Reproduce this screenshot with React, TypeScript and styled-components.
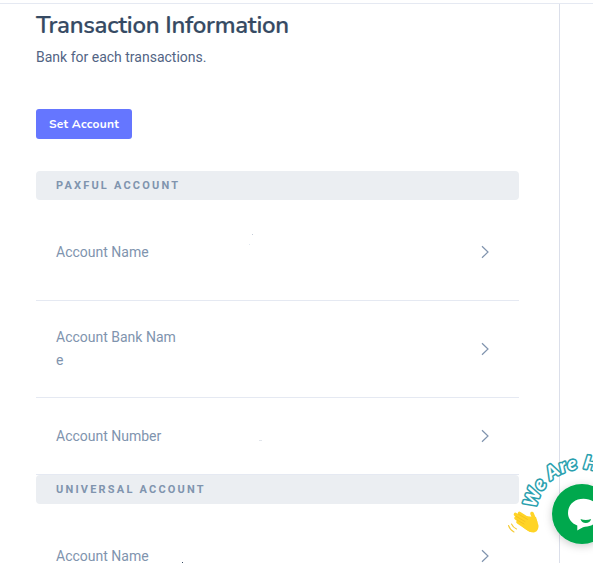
import React from 'react';
import styled, { createGlobalStyle } from 'styled-components';

const GlobalStyle = createGlobalStyle`
  *, *::before, *::after { box-sizing: border-box; }
  html, body { margin: 0; height: 100%; overflow: hidden; background: #fff; }
  body { font-family: Roboto, sans-serif; font-size: 14px; color: #526484; }
`;

const Page = styled.div`
  position: relative;
  height: 564px;
  padding-top: 3px;
  overflow: hidden;
`;

const Card = styled.main`
  height: 560px;
  border-top: 1px solid #e5e9f2;
  display: grid;
  grid-template-columns: 560px 1fr;
`;

const Content = styled.section`
  border-right: 1px solid #dbdfea;
  padding: 7px 40px 0 36px;
  overflow: hidden;
`;

const Title = styled.h4`
  margin: 0;
  height: 28px;
  font: 600 24px/28px "Nunito", "Open Sans", sans-serif;
  letter-spacing: -0.28px;
  color: #364a63;
  -webkit-text-stroke: 0.2px #364a63;
  white-space: nowrap;
`;

const Description = styled.p`
  margin: 7px 0 40px;
  line-height: 23px;
`;

const Button = styled.button`
  display: block;
  width: 96px;
  height: 30px;
  margin: 0 0 32px;
  padding: 0;
  border: 0;
  border-radius: 3px;
  background: #6576ff;
  color: #fff;
  font: 700 12px/20px "Nunito", "Open Sans", sans-serif;
  letter-spacing: 0.24px;
  white-space: nowrap;
`;

const GroupHead = styled.h6`
  margin: 0;
  height: 29px;
  padding: 0 20px;
  border-radius: 4px;
  background: #ebeef2;
  color: #8094ae;
  font: 700 11px/29px Roboto, sans-serif;
  letter-spacing: 2.2px;
  text-transform: uppercase;
`;

const Row = styled.div<{ $height: number; $first?: boolean }>`
  position: relative;
  display: flex;
  align-items: center;
  justify-content: space-between;
  height: ${(p) => p.$height}px;
  padding: ${(p) => (p.$first ? 4 : 0)}px 26px 0 20px;
  border-bottom: 1px solid #e5e9f2;
  color: #8094ae;
`;

const Label = styled.span`
  width: 122px;
  line-height: 23px;
  word-break: break-all;
`;

const Speck = styled.i<{ $x: number; $y: number; $w?: number; $color?: string }>`
  position: absolute;
  left: ${(p) => p.$x}px;
  top: ${(p) => p.$y}px;
  width: ${(p) => p.$w ?? 1}px;
  height: 1px;
  background: ${(p) => p.$color ?? '#c5cdd9'};
`;

const ChatWidget = styled.svg`
  position: absolute;
  left: 493px;
  top: 444px;
  width: 100px;
  height: 120px;
`;

function Chevron() {
  return (
    <svg width="16" height="16" viewBox="0 0 16 16" fill="none" stroke="#8094ae" strokeWidth="1.2">
      <path d="M5 2.2 11 8 5 13.8" />
    </svg>
  );
}

function ChatLauncher() {
  return (
    <ChatWidget viewBox="493 444 100 120">
      <defs>
        <path id="greetingArc" d="M536 508.500 A46.500 46.500 0 0 1 628.500 516" />
        <filter id="launcherShadow" x="-30%" y="-30%" width="160%" height="160%">
          <feDropShadow dx="0" dy="2" stdDeviation="4" floodColor="#000" floodOpacity="0.2" />
        </filter>
      </defs>
      <circle cx="582" cy="514" r="30" fill="#04a84e" filter="url(#launcherShadow)" />
      <path d="M583.500 498.700c-9.300 0-15.500 6-15.500 14.300 0 5.500 3.500 10.300 9.300 12.500v4.900c2.800-1.700 5-2.900 7.700-3.600 9-.8 14.500-6.300 14.500-13.800 0-8.300-6.500-14.300-16-14.300Z" fill="#fff" />
      <path d="M580.500 519c3.200 1.300 7.400 1.300 10.600 0-.6 2.700-2.700 4-5.300 4s-4.700-1.300-5.300-4Z" fill="#04a84e" />
      <text
        fontFamily="Lato, sans-serif"
        fontWeight="900"
        fontStyle="italic"
        fontSize="18.5"
        fill="#fff"
        stroke="#2a9fae"
        strokeWidth="3.2"
        strokeLinejoin="round"
        paintOrder="stroke"
        letterSpacing="0.9"
      >
        <textPath href="#greetingArc">We Are H</textPath>
      </text>
      <g fill="none" stroke="#ffd426" strokeLinecap="round">
        <path strokeWidth="3.600" d="M516 518 530 528M515.500 514.500 532 524M519.500 513.500 533 522M518 522 530 530" />
        <path strokeWidth="3.600" d="M532 513.500 535.500 522" />
      </g>
      <path d="M518 522c5 6 10 10 15.500 10.500 3.200-.2 5.200-3.400 5-7L536 517l-12-1Z" fill="#ffd426" />
      <g fill="none" stroke="#efb51e" strokeWidth=".6" strokeLinecap="round">
        <path d="m516 516.300 9 5.200M518.500 514.200l9 5.200M517 520l7 4" />
      </g>
      <g fill="none" stroke="#f5cb36" strokeWidth="1.1" strokeLinecap="round">
        <path d="M511.500 524q1.500 3.500 5 5M508.500 525.500q1.500 4.500 5.500 6.500" />
      </g>
    </ChatWidget>
  );
}

export default function App() {
  return (
    <>
      <GlobalStyle />
      <Page>
        <Card>
          <Content>
            <Title>Transaction Information</Title>
            <Description>Bank for each transactions.</Description>
            <Button>Set Account</Button>
            <GroupHead>Paxful Account</GroupHead>
            <Row $height={101} $first>
              <Label>Account Name</Label>
              <Speck $x={216} $y={34} />
              <Speck $x={213} $y={44} $color="#e2e9f1" />
              <Chevron />
            </Row>
            <Row $height={97}>
              <Label>Account Bank Name</Label>
              <Chevron />
            </Row>
            <Row $height={77}>
              <Label>Account Number</Label>
              <Speck $x={223} $y={42} $w={3} $color="#e2e6ec" />
              <Chevron />
            </Row>
            <GroupHead>Universal Account</GroupHead>
            <Row $height={101} $first>
              <Label>Account Name</Label>
              <Chevron />
            </Row>
          </Content>
        </Card>
        <Speck $x={182} $y={562} $color="#364a63" />
        <ChatLauncher />
      </Page>
    </>
  );
}
